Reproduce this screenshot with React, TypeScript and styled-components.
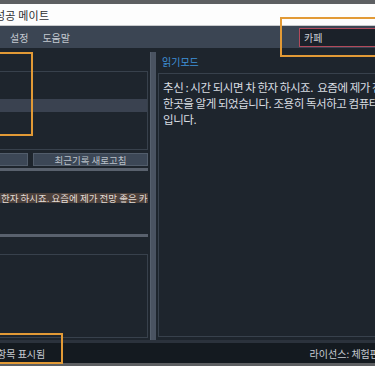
import styled, { createGlobalStyle } from "styled-components";

const GlobalStyle = createGlobalStyle`
  *, *::before, *::after {
    box-sizing: border-box;
  }
  html, body {
    margin: 0;
    padding: 0;
    overflow: hidden;
    background: #1e252d;
  }
  body {
    font-family: "Noto Sans CJK KR", "Noto Sans", sans-serif;
  }
`;

const Page = styled.div`
  position: relative;
  width: 375px;
  height: 366px;
  display: flex;
  flex-direction: column;
  overflow: hidden;
  background: #1e252d;
`;

const EdgeStrip = styled.div`
  height: ${(p: { $h: number }) => p.$h}px;
  background: #5d5f62;
  flex-shrink: 0;
`;

const TitleBar = styled.div`
  height: 22px;
  background: #fdfdfd;
  border-bottom: 1px solid #c9cbcd;
  display: flex;
  align-items: center;
  flex-shrink: 0;
`;

const TitleText = styled.span`
  margin-left: -5px;
  font-size: 11px;
  color: #2d2f33;
  letter-spacing: 0.2px;
`;

const MenuBar = styled.div`
  height: 22px;
  background: #3b4553;
  display: flex;
  align-items: center;
  padding-left: 10px;
  gap: 14px;
  flex-shrink: 0;
`;

const MenuItem = styled.span`
  font-size: 10px;
  color: #c3c9d0;
`;

const Search = styled.div`
  margin-left: auto;
  margin-right: -26px;
  width: 102px;
  height: 19px;
  border: 1px solid #b24a5b;
  background: #1b2129;
  display: flex;
  align-items: center;
  padding-left: 4px;
  font-size: 10px;
  color: #cdd2d8;
`;

const Body = styled.div`
  flex: 1;
  display: grid;
  grid-template-columns: 148px 6px 1fr;
  column-gap: 2px;
  padding-top: 4px;
  min-height: 0;
`;

const Column = styled.div`
  display: flex;
  flex-direction: column;
  min-width: 0;
`;

const PanelLabel = styled.div`
  height: 19px;
  flex-shrink: 0;
  font-size: 10px;
  color: #3f91d8;
  padding-left: 4px;
  display: flex;
  align-items: center;
`;

const ListBox = styled.div`
  height: ${(p: { $h: number }) => p.$h}px;
  border: 1px solid #38414c;
  border-left: none;
  background: #1e252d;
  display: flex;
  flex-direction: column;
  padding-top: 14px;
  flex-shrink: 0;
`;

const ListRow = styled.div<{ $selected?: boolean }>`
  height: 13px;
  background: ${(p) => (p.$selected ? "#3a4250" : "transparent")};
`;

const ButtonRow = styled.div`
  display: flex;
  gap: 5px;
  margin-top: 3px;
  flex-shrink: 0;
`;

const Button = styled.div<{ $w?: number }>`
  height: 13px;
  ${(p) => (p.$w ? `width: ${p.$w}px;` : "flex: 1;")}
  background: #3c4756;
  border: 1px solid #525d6b;
  border-left: ${(p) => (p.$w ? "none" : "1px solid #525d6b")};
  display: flex;
  align-items: center;
  justify-content: center;
  font-size: 9.5px;
  color: #b9c0c8;
`;

const HSplit = styled.div`
  height: 3px;
  background: #59616d;
  margin-top: 2px;
  flex-shrink: 0;
`;

const TableArea = styled.div`
  height: 61px;
  padding-top: 22px;
  flex-shrink: 0;
`;

const TableRow = styled.div`
  height: 10px;
  background: #4b403b;
  font-size: 9.5px;
  line-height: 10px;
  color: #e2dcd6;
  white-space: nowrap;
  overflow: hidden;
  padding-left: 1px;
`;

const Spacer = styled.div`
  height: ${(p: { $h: number }) => p.$h}px;
  flex-shrink: 0;
`;

const VSplit = styled.div`
  background: #4a5361;
  border-left: 1px solid #56606e;
`;

const ReadBox = styled.div`
  flex: 1;
  border: 1px solid #38414c;
  border-right: none;
  margin-top: 2px;
  padding: 5px 0 0 4px;
  font-size: 11.5px;
  letter-spacing: -0.45px;
  line-height: 16px;
  color: #d9dde2;
  white-space: pre;
  overflow: hidden;
`;

const BottomBand = styled.div`
  height: 3px;
  background: #2b323c;
  flex-shrink: 0;
`;

const StatusBar = styled.div`
  height: 20px;
  background: #141a20;
  display: flex;
  align-items: center;
  justify-content: space-between;
  font-size: 10px;
  color: #c6cbd1;
  flex-shrink: 0;
`;

const StatusLeft = styled.span`
  margin-left: -3px;
`;

const StatusRight = styled.span`
  margin-right: -4px;
  white-space: nowrap;
`;

const Highlight = styled.div<{ $x: number; $y: number; $w: number; $h: number }>`
  position: absolute;
  left: ${(p) => p.$x}px;
  top: ${(p) => p.$y}px;
  width: ${(p) => p.$w}px;
  height: ${(p) => p.$h}px;
  border: 2px solid #e29a36;
  pointer-events: none;
`;

const readLines = [
  "추신 : 시간 되시면 차 한자 하시죠.  요즘에 제가 전망 좋은 카페",
  "한곳을 알게 되었습니다. 조용히 독서하고 컴퓨터 작업하기 좋은 곳",
  "입니다.",
];

export default function App() {
  return (
    <>
      <GlobalStyle />
      <Page>
        <EdgeStrip $h={4} />
        <TitleBar>
          <TitleText>성공 메이트</TitleText>
        </TitleBar>
        <MenuBar>
          <MenuItem>설정</MenuItem>
          <MenuItem>도움말</MenuItem>
          <Search>카페</Search>
        </MenuBar>
        <Body>
          <Column>
            <Spacer $h={19} />
            <ListBox $h={79}>
              <ListRow />
              <ListRow $selected />
            </ListBox>
            <ButtonRow>
              <Button $w={28} />
              <Button>최근기록 새로고침</Button>
            </ButtonRow>
            <HSplit />
            <TableArea>
              <TableRow>한자 하시죠. 요즘에 제가 전망 좋은 카페 한곳을</TableRow>
            </TableArea>
            <HSplit />
            <Spacer $h={17} />
            <ListBox $h={84} />
          </Column>
          <VSplit />
          <Column>
            <PanelLabel>읽기모드</PanelLabel>
            <ReadBox>{readLines.join("\n")}</ReadBox>
            <Spacer $h={3} />
          </Column>
        </Body>
        <BottomBand />
        <StatusBar>
          <StatusLeft>항목 표시됨</StatusLeft>
          <StatusRight>라이선스: 체험판</StatusRight>
        </StatusBar>
        <EdgeStrip $h={3} />
        <Highlight $x={-4} $y={52} $w={37} $h={84} />
        <Highlight $x={280} $y={17} $w={100} $h={40} />
        <Highlight $x={-4} $y={333} $w={67} $h={31} />
      </Page>
    </>
  );
}
